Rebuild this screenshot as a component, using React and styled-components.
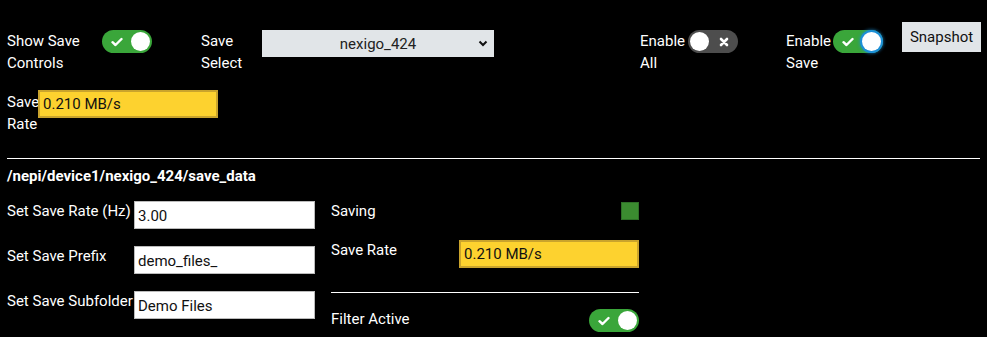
import styled, { createGlobalStyle } from "styled-components";

const GlobalStyle = createGlobalStyle`
  html, body {
    margin: 0;
    padding: 0;
    background: #000;
  }
  body {
    font-family: Roboto, "Liberation Sans", sans-serif;
    font-size: 15px;
    color: #fff;
  }
`

const Page = styled.div`
  padding: 30px 7px 0 7px;
  width: 987px;
  height: 337px;
  box-sizing: border-box;
  overflow: hidden;
`

const TopRow = styled.div`
  display: flex;
  flex-direction: row;
  align-items: flex-start;
`

const Field = styled.div`
  display: flex;
  flex-direction: row;
  align-items: flex-start;
  width: ${(props) => props.width || "auto"};
  flex-shrink: 0;
`

const Label = styled.div`
  width: ${(props) => props.width || "auto"};
  line-height: 22px;
  flex-shrink: 0;
  white-space: ${(props) => (props.nowrap ? "nowrap" : "normal")};
`

const Pill = styled.div`
  position: relative;
  width: 50px;
  height: 23px;
  border-radius: 12px;
  background: ${(props) => (props.on ? "#3aa63a" : "#4d4d4d")};
  flex-shrink: 0;
`

const Knob = styled.div`
  position: absolute;
  top: 2px;
  left: ${(props) => (props.on ? "29px" : "2px")};
  width: 19px;
  height: 19px;
  border-radius: 50%;
  background: #fff;
  box-shadow: ${(props) => (props.focus ? "0 0 0 2px #1c8fd6, 0 0 3px 3px rgba(28,143,214,0.5)" : "none")};
`

const PillIcon = styled.svg`
  position: absolute;
  top: 7px;
  left: ${(props) => (props.on ? "9px" : "31px")};
  width: ${(props) => (props.on ? "12px" : "10px")};
  height: 10px;
`

function Toggle({ on = true, focus = false }) {
  return (
    <Pill on={on}>
      {on ? (
        <PillIcon on viewBox="0 0 12 10">
          <path d="M1.5 5.2 L4.5 8 L10.5 2" stroke="#fff" strokeWidth="2.4" fill="none" strokeLinecap="round" strokeLinejoin="round" />
        </PillIcon>
      ) : (
        <PillIcon viewBox="0 0 10 10">
          <path d="M2 2 L8 8 M8 2 L2 8" stroke="#fff" strokeWidth="2.6" strokeLinecap="round" />
        </PillIcon>
      )}
      <Knob on={on} focus={focus} />
    </Pill>
  )
}

const SelectBox = styled.div`
  position: relative;
  width: 232px;
  height: 27px;
  background: #e1e5e8;
  color: #222;
  font-size: 15px;
  display: flex;
  align-items: center;
  justify-content: center;
  flex-shrink: 0;
`

const Chevron = styled.svg`
  position: absolute;
  right: 6px;
  top: 10px;
  width: 10px;
  height: 7px;
`

const Button = styled.div`
  width: 79px;
  height: 30px;
  margin-top: -8px;
  background: #e1e5e8;
  color: #111;
  font-size: 15px;
  display: flex;
  align-items: center;
  justify-content: center;
  flex-shrink: 0;
`

const RateRow = styled.div`
  display: flex;
  flex-direction: row;
  align-items: flex-start;
  margin-top: 17px;
`

const YellowBox = styled.div`
  width: ${(props) => props.width || "180px"};
  height: 28px;
  box-sizing: border-box;
  background: #fdd22f;
  border: 2px solid #caa42c;
  color: #111;
  font-size: 15px;
  display: flex;
  align-items: center;
  padding-left: 3px;
  margin-top: ${(props) => props.top || "0"};
  flex-shrink: 0;
`

const Divider = styled.div`
  height: 1px;
  background: #fff;
  width: ${(props) => props.width || "100%"};
  margin: ${(props) => props.margin || "0"};
`

const Title = styled.div`
  font-weight: bold;
  line-height: 22px;
  margin-top: 6px;
`

const Columns = styled.div`
  display: flex;
  flex-direction: row;
  gap: 16px;
  margin-top: 14px;
`

const Column = styled.div`
  width: ${(props) => props.width};
  display: flex;
  flex-direction: column;
`

const FormRow = styled.div`
  display: flex;
  flex-direction: row;
  align-items: flex-start;
  justify-content: space-between;
  height: ${(props) => props.height || "45px"};
`

const RowLabel = styled.div`
  line-height: 22px;
  margin-top: -1px;
  white-space: nowrap;
`

const TextInput = styled.div`
  width: 181px;
  height: 28px;
  box-sizing: border-box;
  background: #fff;
  border: 1px solid #bbb;
  color: #111;
  font-size: 15px;
  display: flex;
  align-items: center;
  padding-left: 3px;
  padding-top: 2px;
  flex-shrink: 0;
`

const StatusSquare = styled.div`
  width: 18px;
  height: 18px;
  box-sizing: border-box;
  margin-top: 1px;
  background: #3b8c30;
  border: 1px solid #2e7027;
`

export default function App() {
  return (
    <Page>
      <GlobalStyle />
      <TopRow>
        <Field width="194px">
          <Label width="95px">Show Save Controls</Label>
          <Toggle on />
        </Field>
        <Field width="439px">
          <Label width="61px">Save Select</Label>
          <SelectBox>
            nexigo_424
            <Chevron viewBox="0 0 10 7">
              <path d="M1.5 1.5 L5 5 L8.5 1.5" stroke="#111" strokeWidth="2" fill="none" />
            </Chevron>
          </SelectBox>
        </Field>
        <Field width="146px">
          <Label width="48px">Enable All</Label>
          <Toggle on={false} />
        </Field>
        <Field width="116px">
          <Label width="47px">Enable Save</Label>
          <Toggle on focus />
        </Field>
        <Button>Snapshot</Button>
      </TopRow>

      <RateRow>
        <Label width="31px">Save Rate</Label>
        <YellowBox top="-1px">0.210 MB/s</YellowBox>
      </RateRow>

      <Divider width="973px" margin="23px 0 0 0" />
      <Title>/nepi/device1/nexigo_424/save_data</Title>

      <Columns>
        <Column width="308px">
          <FormRow>
            <RowLabel>Set Save Rate (Hz)</RowLabel>
            <TextInput>3.00</TextInput>
          </FormRow>
          <FormRow>
            <RowLabel>Set Save Prefix</RowLabel>
            <TextInput>demo_files_</TextInput>
          </FormRow>
          <FormRow>
            <RowLabel>Set Save Subfolder</RowLabel>
            <TextInput>Demo Files</TextInput>
          </FormRow>
        </Column>
        <Column width="308px">
          <FormRow height="39px">
            <RowLabel>Saving</RowLabel>
            <StatusSquare />
          </FormRow>
          <FormRow height="52px">
            <RowLabel>Save Rate</RowLabel>
            <YellowBox>0.210 MB/s</YellowBox>
          </FormRow>
          <Divider margin="0 0 16px 0" />
          <FormRow>
            <RowLabel>Filter Active</RowLabel>
            <Toggle on />
          </FormRow>
        </Column>
      </Columns>
    </Page>
  )
}
